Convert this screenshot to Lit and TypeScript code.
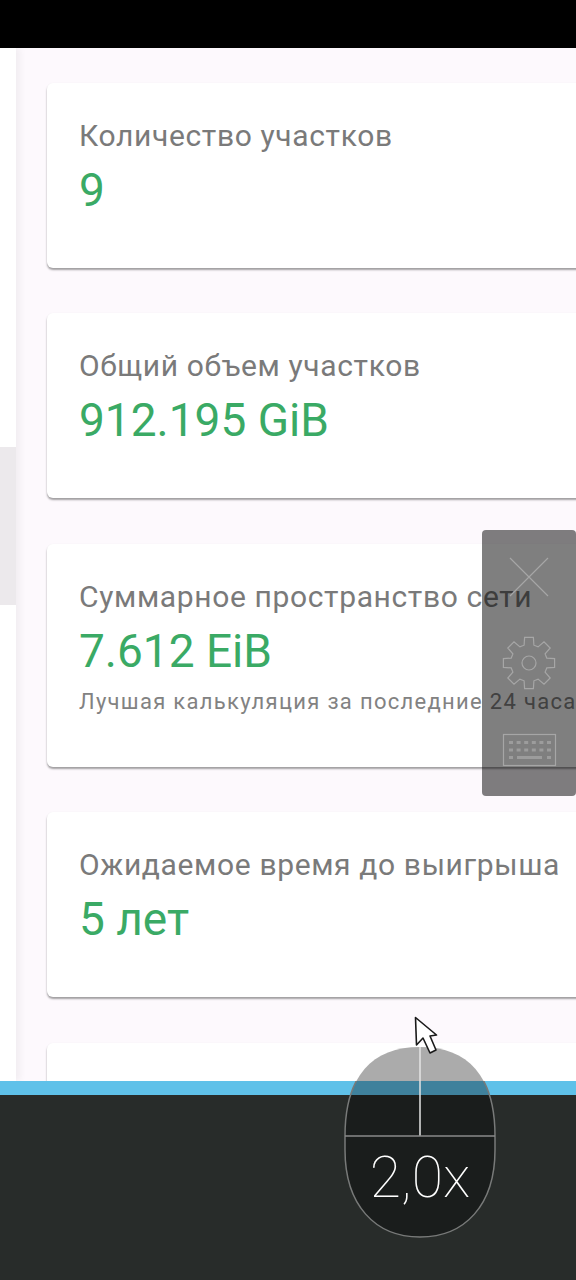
import { LitElement, html, css, svg } from "lit";
import { customElement } from "lit/decorators.js";

function gearPath(cx: number, cy: number): string {
  const pts: string[] = [];
  const pol = (r: number, a: number) =>
    `${(cx + r * Math.sin(a)).toFixed(1)} ${(cy - r * Math.cos(a)).toFixed(1)}`;
  const n = 8;
  for (let i = 0; i < n; i++) {
    const a = (i * 2 * Math.PI) / n;
    pts.push(pol(18.5, a - 0.27), pol(26, a - 0.17), pol(26, a + 0.17), pol(18.5, a + 0.27));
  }
  return "M" + pts.join("L") + "Z";
}

const cards = [
  { label: "Количество участков", value: "9" },
  { label: "Общий объем участков", value: "912.195 GiB" },
  { label: "Суммарное пространство сети", value: "7.612 EiB", note: "Лучшая калькуляция за последние 24 часа" },
  { label: "Ожидаемое время до выигрыша", value: "5 лет" },
];

@customElement("app-root")
export class AppRoot extends LitElement {
  static styles = css`
    :host {
      display: block;
      width: 576px;
      height: 1280px;
      position: relative;
      overflow: hidden;
      font-family: Roboto, "Noto Sans", sans-serif;
      background: #282c2a;
    }
    .top { height: 48px; background: #000; }
    .body { display: flex; height: 1033px; overflow: hidden; background: #fdf9fd; }
    .side {
      width: 16px;
      flex: none;
      background: #fff;
      padding-top: 399px;
      box-sizing: border-box;
      box-shadow: 4px 0 7px rgba(0, 0, 0, 0.05);
      z-index: 1;
    }
    .sel { height: 158px; background: #ece9ec; }
    .main {
      flex: 1;
      padding: 34.8px 0 0 31px;
      display: flex;
      flex-direction: column;
      gap: 45.5px;
      min-width: 0;
    }
    .card {
      width: 560px;
      flex: none;
      box-sizing: border-box;
      background: #fff;
      border-radius: 6px;
      padding: 34px 32px 50px;
      box-shadow: 0 2px 2px rgba(0, 0, 0, 0.36), 0 0 2px rgba(0, 0, 0, 0.03);
    }
    .label { font-size: 30px; line-height: 38px; color: #7a7a7a; white-space: nowrap; letter-spacing: 0.64px; }
    .value { font-size: 46px; line-height: 56px; color: #3aaa65; white-space: nowrap; margin-top: 7px; }
    .note { font-size: 22px; line-height: 31px; color: #828282; white-space: nowrap; letter-spacing: 1.3px; margin-top: 7px; }
    .blue { height: 14px; background: #5fc1e9; }
    .panel {
      position: absolute;
      left: 482px;
      top: 530px;
      width: 94px;
      height: 266px;
      background: rgba(0, 0, 0, 0.5);
      border-radius: 4px;
    }
    .overlay { position: absolute; left: 0; top: 0; }
    .mouse-text { font-family: Roboto, sans-serif; font-weight: 100; font-size: 57px; fill: #fff; }
  `;

  render() {
    return html`
      <div class="top"></div>
      <div class="body">
        <div class="side"><div class="sel"></div></div>
        <div class="main">
          ${cards.map(
            (c) => html`<div class="card">
              <div class="label">${c.label}</div>
              <div class="value">${c.value}</div>
              ${c.note ? html`<div class="note">${c.note}</div>` : ""}
            </div>`
          )}
          <div class="card"><div class="label">&nbsp;</div></div>
        </div>
      </div>
      <div class="blue"></div>
      <div class="panel"></div>
      <svg class="overlay" width="576" height="1280" viewBox="0 0 576 1280" fill="none">
        <g stroke="#a6a6a6" stroke-width="1.2">
          <path d="M510 558L548 596M548 558L510 596" />
          <path d="${gearPath(529, 663)}" />
          <circle cx="529" cy="663" r="7" />
          <rect x="503.5" y="734.5" width="52" height="31" />
        </g>
        <g fill="#9c9c9c">
          ${[0, 1, 2, 3, 4, 5].map((i) =>
            svg`<rect x="${509 + i * 7.6}" y="741" width="4" height="3"/><rect x="${509 + i * 7.6}" y="748.5" width="4" height="3"/>`
          )}
          <rect x="509" y="756" width="4" height="3" />
          <rect x="517" y="756" width="25" height="3" />
          <rect x="547" y="756" width="4" height="3" />
        </g>

        <path d="M345 1136C345 1076 372 1047 420 1047C468 1047 495 1076 495 1136V1150C495 1205 465 1237 420 1237C375 1237 345 1205 345 1150Z"
          fill="rgba(0,0,0,0.33)" />
        <clipPath id="lower"><rect x="0" y="1081" width="576" height="199" /></clipPath>
        <path d="M345 1136C345 1076 372 1047 420 1047C468 1047 495 1076 495 1136V1150C495 1205 465 1237 420 1237C375 1237 345 1205 345 1150Z"
          stroke="#787a79" stroke-width="1.5" fill="none" clip-path="url(#lower)" />
        <path d="M420 1047V1136" stroke="#e4e4e4" stroke-width="1.5" />
        <path d="M345 1136H495" stroke="#8a8a8a" stroke-width="1.5" />
        <text class="mouse-text" x="420" y="1197" text-anchor="middle">2,0x</text>

        <path d="M415.5 1017.5L416.5 1045L423 1038L430 1053L436 1050L430 1036L436.5 1035Z"
          fill="#fff" stroke="#1a1a1a" stroke-width="1.6" stroke-linejoin="round" />
      </svg>
    `;
  }
}
